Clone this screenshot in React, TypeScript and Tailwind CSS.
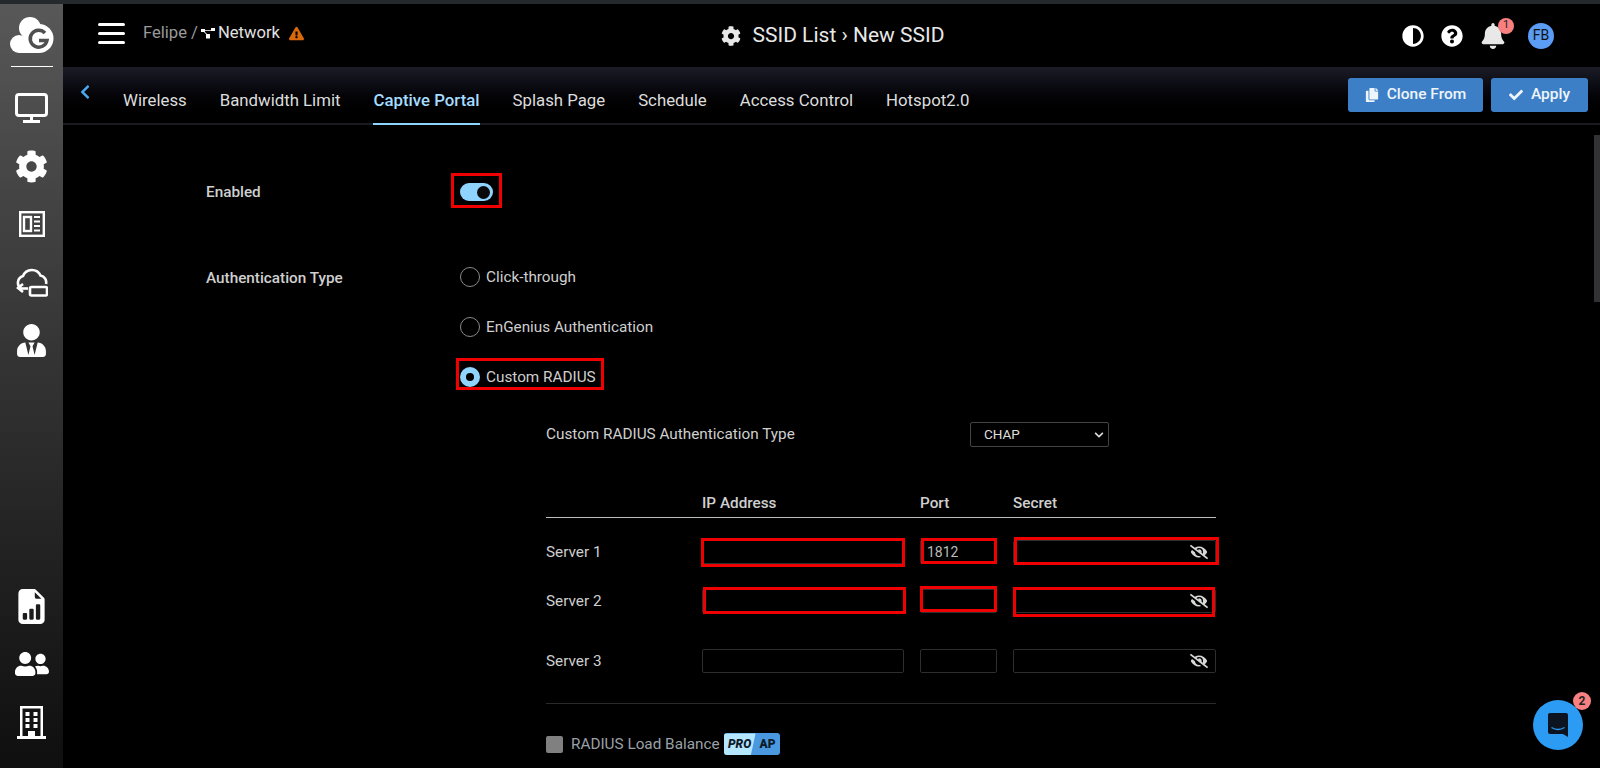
import { BsFileEarmarkBarGraphFill } from "react-icons/bs";
import {
    FaAdjust,
    FaBell,
    FaCheck,
    FaChevronDown,
    FaChevronLeft,
    FaCog,
    FaCopy,
    FaExclamationTriangle,
    FaEyeSlash,
    FaQuestionCircle,
    FaUserFriends,
    FaUserTie,
} from "react-icons/fa";

const tabs = ["Wireless", "Bandwidth Limit", "Captive Portal", "Splash Page", "Schedule", "Access Control", "Hotspot2.0"];

function LogoMark() {
    return (
        <svg viewBox="0 0 44 37" className="h-[37px] w-[44px]">
            <g fill="#fff">
                <circle cx="29" cy="21.500" r="14.500" />
                <circle cx="20" cy="11" r="11" />
                <circle cx="9" cy="27" r="9" />
                <rect x="9" y="20" width="20" height="16" />
            </g>
            <path d="M35 16a8.500 8.500 0 1 0 2 7.500h-8" fill="none" stroke="#4f4f4f" strokeWidth="3.500" />
        </svg>
    );
}

function MonitorIcon() {
    return (
        <svg viewBox="0 0 33 30" className="h-[30px] w-[33px]" fill="none" stroke="#fff" strokeWidth="3">
            <rect x="1.500" y="1.500" width="30" height="21" rx="2.500" />
            <path d="M16.500 23v4" />
            <path d="M8 28.500h17" />
        </svg>
    );
}

function NewsIcon() {
    return (
        <svg viewBox="0 0 26 26" className="size-[26px]" fill="none" stroke="#fff" strokeWidth="2.400">
            <rect x="1.200" y="1.200" width="23.600" height="23.600" />
            <rect x="5" y="6" width="7" height="14" />
            <path d="M15 6h6M15 10.500h6M15 15h6M15 19.500h6" strokeWidth="2" />
        </svg>
    );
}

function CloudSyncIcon() {
    return (
        <svg viewBox="0 0 32 30" className="h-[30px] w-[32px]" fill="none" stroke="#fff" strokeWidth="2.600">
            <path d="M5 21.500a7 7 0 0 1 2-12.500A9.500 9.500 0 0 1 24.500 8.500 7 7 0 0 1 30 17" />
            <path d="M7 17l-5 4 5 4" />
            <path d="M3 21.500h9" />
            <rect x="14" y="20" width="17" height="8.500" rx="1.500" />
        </svg>
    );
}

function BuildingIcon() {
    return (
        <svg viewBox="0 0 29 33" className="h-[33px] w-[29px]" fill="#fff">
            <path d="M3 0h23v30h3v3H0v-3h3Zm2.500 2.500V30H11v-5h7v5h5.500V2.500Z" />
            <path d="M8.500 6h4v4h-4Zm8 0h4v4h-4Zm-8 6h4v4h-4Zm8 0h4v4h-4Zm-8 6h4v4h-4Zm8 0h4v4h-4Z" />
        </svg>
    );
}

function NetworkGlyph() {
    return (
        <svg viewBox="0 0 14 11" className="h-[11px] w-[14px]" fill="#fff">
            <rect x="0" y="1" width="4" height="3" />
            <rect x="10" y="0" width="4" height="3" />
            <rect x="5" y="6" width="4" height="4.500" />
            <path d="M3 2h8v.800H3ZM3 3l4 4-.600.500-4-4Z" />
        </svg>
    );
}

function RailItem({ children }: { children: React.ReactNode }) {
    return <div className="flex h-[58px] w-full items-center justify-center">{children}</div>;
}

function Sidebar() {
    return (
        <aside className="flex w-[63px] shrink-0 flex-col items-center bg-gradient-to-b from-[#585858] to-[#0f0f0f] pb-[17px]">
            <div className="mt-[13px]">
                <LogoMark />
            </div>
            <div className="mt-[12px] mb-[12px] h-px w-[42px] bg-white" />
            <RailItem><MonitorIcon /></RailItem>
            <RailItem><FaCog className="size-[33px] text-white" /></RailItem>
            <RailItem><NewsIcon /></RailItem>
            <RailItem><CloudSyncIcon /></RailItem>
            <RailItem><FaUserTie className="size-[33px] text-white" /></RailItem>
            <div className="mt-auto w-full">
                <RailItem><BsFileEarmarkBarGraphFill className="size-[35px] text-white" /></RailItem>
                <RailItem><FaUserFriends className="size-[34px] text-white" /></RailItem>
                <RailItem><BuildingIcon /></RailItem>
            </div>
        </aside>
    );
}

function Header() {
    return (
        <header className="grid h-[63px] shrink-0 grid-cols-[1fr_auto_1fr] items-center bg-black pl-[35px] pr-[46px]">
            <div className="flex items-center pb-[4px]">
                <div className="flex w-[27px] flex-col gap-[6px]">
                    <span className="h-[3px] rounded-full bg-white" />
                    <span className="h-[3px] rounded-full bg-white" />
                    <span className="h-[3px] rounded-full bg-white" />
                </div>
                <span className="ml-[18px] text-[16.600px] text-[#9a9a9a]">Felipe /</span>
                <span className="mx-[3px]"><NetworkGlyph /></span>
                <span className="text-[16.600px] text-[#e2e2e2]">Network</span>
                <FaExclamationTriangle className="ml-[9px] size-[15px] text-[#d9690a]" />
            </div>
            <div className="ml-[14px] flex items-center gap-[11px] text-[#e8e8e8]">
                <FaCog className="size-[20px]" />
                <span className="text-[21px] leading-none">SSID List › New SSID</span>
            </div>
            <div className="flex items-center justify-end">
                <FaAdjust className="size-[22px] text-white" />
                <FaQuestionCircle className="ml-[17px] size-[22px] text-white" />
                <div className="relative ml-[17px]">
                    <FaBell className="size-[26px] text-[#e8e8e8]" />
                    <span className="absolute -top-[5px] -right-[8px] flex size-[16px] items-center justify-center rounded-full bg-[#f98080] text-[11px] text-[#222]">1</span>
                </div>
                <span className="ml-[22px] flex size-[26px] items-center justify-center rounded-full bg-[#5b9cf5] text-[14px] text-[#111]">FB</span>
            </div>
        </header>
    );
}

function TabBar() {
    return (
        <nav className="flex h-[58px] shrink-0 border-b-2 border-[#1b1b22] bg-gradient-to-b from-[#1c1c28] to-black pl-[17px] pr-[12px]">
            <FaChevronLeft className="mt-[17px] h-[16px] w-[10px] text-[#4aa8f0]" />
            <div className="ml-[33px] flex gap-[33px]">
                {tabs.map((tab) => (
                    <span
                        key={tab}
                        className={
                            tab === "Captive Portal"
                                ? "-mb-[2px] flex items-center border-b-2 border-[#8fd4ff] pt-[12px] text-[16.800px] font-medium text-[#a5dcff]"
                                : "-mb-[2px] flex items-center border-b-2 border-transparent pt-[12px] text-[16.800px] text-[#dddddd]"
                        }
                    >
                        {tab}
                    </span>
                ))}
            </div>
            <div className="mt-[11px] ml-auto flex h-[34px] gap-[8px]">
                <button className="flex w-[135px] items-center justify-center gap-[8px] rounded-[3px] bg-[#3d7fc6] text-[15.500px] font-medium text-[#eef5fc]">
                    <FaCopy className="size-[14px]" />
                    Clone From
                </button>
                <button className="flex w-[97px] items-center justify-center gap-[8px] rounded-[3px] bg-[#3d7fc6] text-[15.500px] font-medium text-[#eef5fc]">
                    <FaCheck className="size-[14px]" />
                    Apply
                </button>
            </div>
        </nav>
    );
}

// red annotation drawn over a control, offsets vary since they were hand drawn
function Mark({ className }: { className: string }) {
    return <span className={`pointer-events-none absolute border-[3px] border-[#f00000] ${className}`} />;
}

function Radio({ label, checked }: { label: string; checked?: boolean }) {
    return (
        <div className="relative flex h-5 w-fit items-center gap-[6px]">
            {checked ? (
                <span className="flex size-5 items-center justify-center rounded-full bg-[#8fd4ff]">
                    <span className="size-[8px] rounded-full bg-black" />
                </span>
            ) : (
                <span className="size-5 rounded-full border border-[#8a8a8a]" />
            )}
            <span className="text-[15.300px] text-[#cfcfcf]">{label}</span>
            {checked && <Mark className="-top-[9px] -right-[8px] -bottom-[3px] -left-[4px]" />}
        </div>
    );
}

function Field({ value, eye, mark }: { value?: string; eye?: boolean; mark?: string }) {
    return (
        <div className="relative flex h-6 items-center rounded-[2px] border border-[#2e2e2e] pr-[7px] pl-[6px] text-[14px] text-[#bbbbbb]">
            {value}
            {eye && <FaEyeSlash className="ml-auto size-[18px] text-[#d8d8d8]" />}
            {mark && <Mark className={mark} />}
        </div>
    );
}

function ServerRow({ name, className, port, marks }: { name: string; className: string; port?: string; marks?: [string, string, string] }) {
    return (
        <div className={`grid grid-cols-[140px_202px_77px_203px] gap-x-[16px] ${className}`}>
            <span className="flex items-center text-[15.300px] text-[#cfcfcf]">{name}</span>
            <Field mark={marks?.[0]} />
            <Field value={port} mark={marks?.[1]} />
            <Field eye mark={marks?.[2]} />
        </div>
    );
}

function RadiusForm() {
    return (
        <div className="ml-[340px] w-[670px]">
            <div className="mt-[35px] flex h-[25px] items-center">
                <span className="w-[424px] text-[15.300px] text-[#cfcfcf]">Custom RADIUS Authentication Type</span>
                <div className="flex h-full w-[139px] items-center justify-between rounded-[2px] border border-[#444444] pr-[4px] pl-[13px] text-[13.500px] text-[#dddddd]">
                    CHAP
                    <FaChevronDown className="size-[10px]" />
                </div>
            </div>
            <div className="mt-[43px] grid h-[28px] grid-cols-[140px_202px_77px_203px] gap-x-[16px] border-b border-[#bdbdbd] pt-[2px] text-[15.300px] font-medium text-[#cfcfcf]">
                <span />
                <span>IP Address</span>
                <span>Port</span>
                <span>Secret</span>
            </div>
            <ServerRow
                name="Server 1"
                className="mt-[22px]"
                port="1812"
                marks={[
                    "-top-[3px] -right-[2px] -bottom-[4px] -left-[2px]",
                    "-top-[3px] -right-[1px] -bottom-[1px] left-0",
                    "-top-[4px] -right-[4px] -bottom-[2px] left-0",
                ]}
            />
            <ServerRow
                name="Server 2"
                className="mt-[25px]"
                marks={[
                    "-top-[3px] -right-[3px] -bottom-[2px] left-0",
                    "-top-[4px] -right-[1px] bottom-0 -left-[1px]",
                    "-top-[3px] right-0 -bottom-[5px] -left-[1px]",
                ]}
            />
            <ServerRow name="Server 3" className="mt-[36px]" />
            <div className="mt-[30px] h-px bg-[#2a2a2a]" />
            <div className="mt-[29px] flex items-center">
                <span className="size-[17px] rounded-[2px] bg-[#808080]" />
                <span className="ml-[8px] text-[15.300px] text-[#9aa0a6]">RADIUS Load Balance</span>
                <span className="ml-[4px] flex h-[22px] w-[56px] overflow-hidden rounded-[3px] bg-[#4a98e0] text-[12px] font-black italic text-[#0d1b2a]">
                    <span className="flex w-[32px] items-center justify-center bg-[#b5e6ff] [clip-path:polygon(0_0,100%_0,85%_100%,0_100%)]">PRO</span>
                    <span className="flex flex-1 items-center justify-center not-italic">AP</span>
                </span>
            </div>
        </div>
    );
}

function ChatBubble() {
    return (
        <div className="absolute right-[17px] bottom-[18px] flex size-[50px] items-center justify-center rounded-full bg-[#2b9bf4]">
            <svg viewBox="0 0 20 24" className="h-[24px] w-[20px]">
                <path d="M2 0h16a2 2 0 0 1 2 2v22l-5-3H2a2 2 0 0 1-2-2V2a2 2 0 0 1 2-2Z" fill="#0b1420" />
                <path d="M3.500 14.500c4 2.500 9 2.500 13 0" fill="none" stroke="#2b9bf4" strokeWidth="1.300" />
            </svg>
            <span className="absolute -top-[8px] -right-[8px] flex size-[18px] items-center justify-center rounded-full bg-[#f98080] text-[12px] font-bold text-[#222]">2</span>
        </div>
    );
}

export default function App() {
    return (
        <div className="flex h-[768px] w-[1600px] flex-col overflow-hidden bg-black font-['Roboto',sans-serif]">
            <div className="h-[4px] shrink-0 bg-[#23292c]" />
            <div className="flex min-h-0 flex-1">
                <Sidebar />
                <main className="relative flex min-w-0 flex-1 flex-col">
                    <Header />
                    <TabBar />
                    <div className="relative min-h-0 flex-1 overflow-hidden pt-[58px] pl-[143px]">
                        <div className="flex h-[18px] items-center">
                            <span className="w-[254px] text-[15.300px] font-medium text-[#cfcfcf]">Enabled</span>
                            <div className="relative h-[18px] w-[33px]">
                                <div className="flex h-full items-center justify-end rounded-full bg-[#8fd4ff] pr-[3px]">
                                    <span className="size-[13px] rounded-full bg-[#0a0a0a]" />
                                </div>
                                <Mark className="-top-[10px] -right-[9px] -bottom-[7px] -left-[9px]" />
                            </div>
                        </div>
                        <div className="mt-[66px] flex">
                            <span className="w-[254px] text-[15.300px] font-medium text-[#cfcfcf]">Authentication Type</span>
                            <div className="flex flex-col gap-[30px]">
                                <Radio label="Click-through" />
                                <Radio label="EnGenius Authentication" />
                                <Radio label="Custom RADIUS" checked />
                            </div>
                        </div>
                        <RadiusForm />
                        <div className="absolute top-[10px] right-0 h-[167px] w-[6px] bg-[#323236]" />
                    </div>
                    <ChatBubble />
                </main>
            </div>
        </div>
    );
}
